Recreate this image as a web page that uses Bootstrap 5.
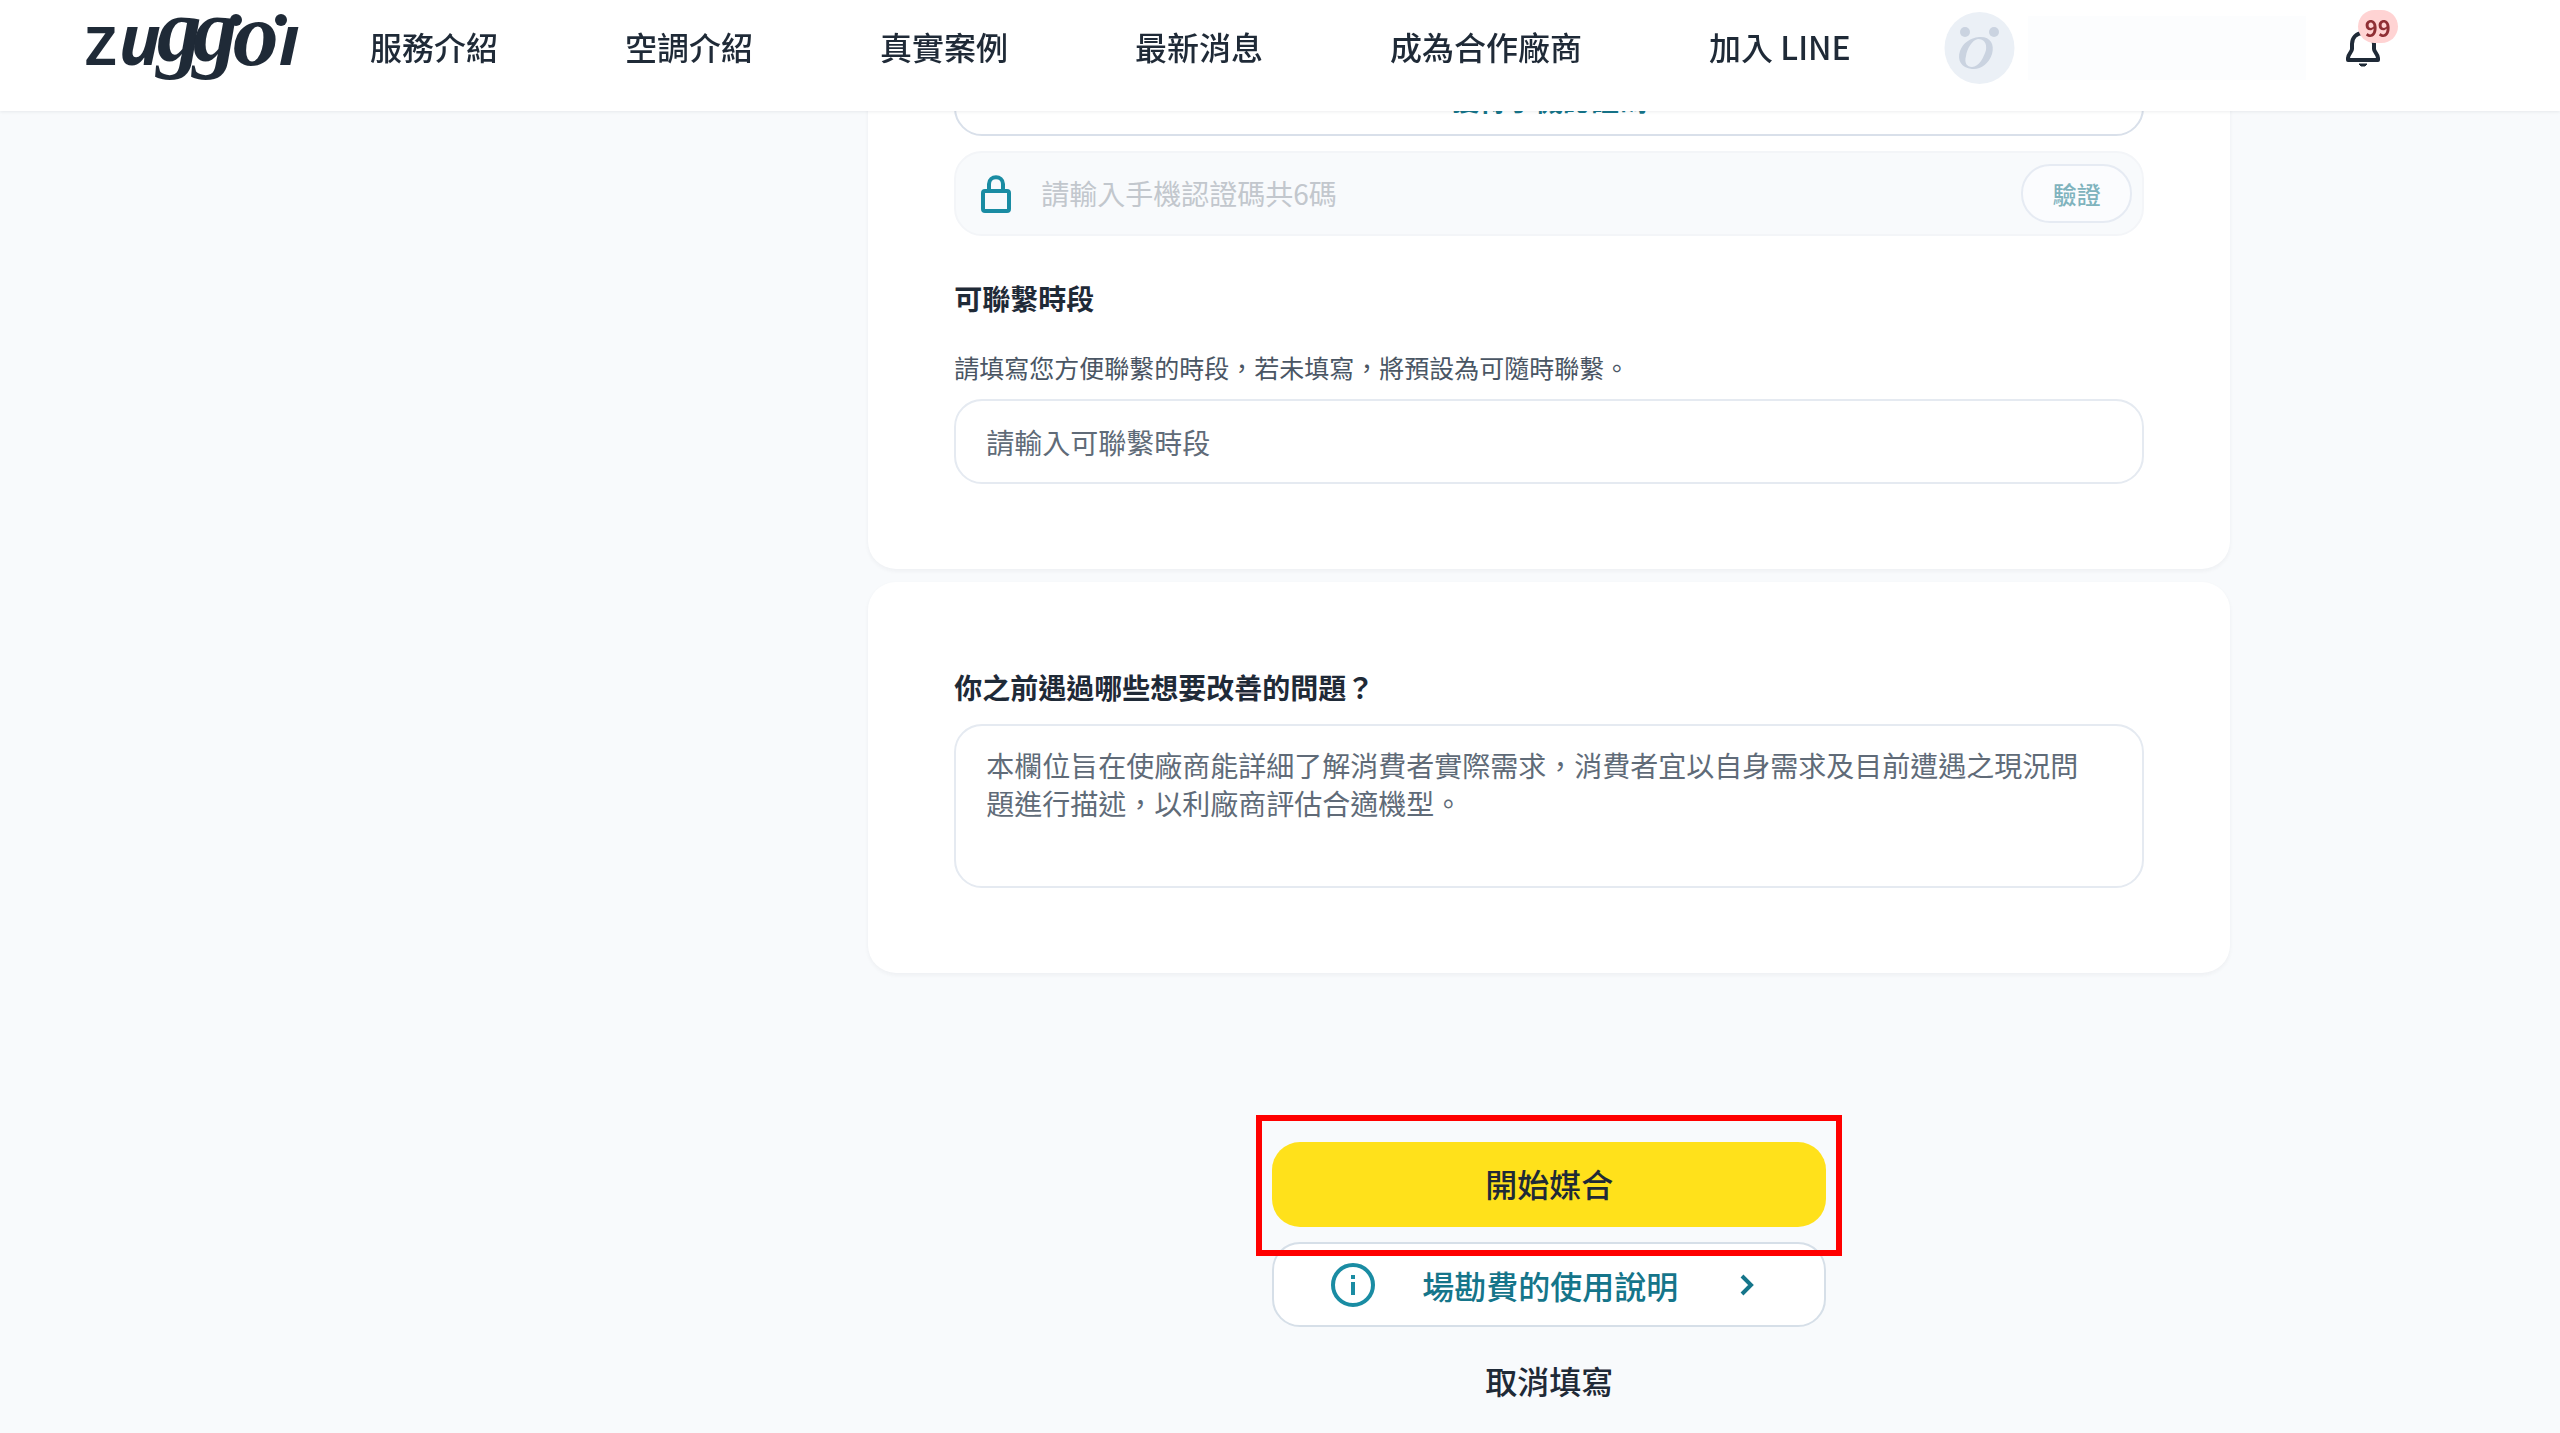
<!DOCTYPE html>
<html lang="zh-Hant">
<head>
<meta charset="utf-8">
<meta name="viewport" content="width=device-width, initial-scale=1">
<title>zuggoi</title>
<link rel="stylesheet" href="https://cdn.jsdelivr.net/npm/bootstrap@5.3.0/dist/css/bootstrap.min.css">
<style>
  :root { --ink: #1f2a37; --teal: #15758a; --teal-bright: #1a8ca3; --line: #e5eaf1; }
  body { background: #f8fafc; color: var(--ink); font-family: "Noto Sans CJK TC", sans-serif; font-size: 28px; line-height: 38px; overflow-x: hidden; }
  .site-header { height: 111px; padding: 0 160px 16px 84px; background: #fff; box-shadow: 0 1px 3px rgba(31, 42, 55, .08); }
  .site-logo { margin-right: 72px; line-height: 0; }
  .site-menu { gap: 127px; margin-right: 93px; padding-bottom: 4px; }
  .site-menu a, .action-btn { font-size: 32px; line-height: 44px; font-weight: 500; color: var(--ink); white-space: nowrap; text-decoration: none; }
  .user-name { width: 278px; height: 64px; margin-left: 13px; margin-right: 39px; background: #fcfdfe; }
  .bell-btn { position: relative; width: 36px; height: 40px; color: var(--ink); line-height: 0; }
  .bell-count { position: absolute; left: 13px; top: -18px; width: 40px; height: 33px; border-radius: 17px; background: #ffd3d3; color: #8f2f35; font-size: 22px; line-height: 34px; font-weight: 700; text-align: center; }
  .form-col { max-width: 1392px; padding: 0 15px; }
  .panel { background: #fff; border-radius: 28px; padding: 61px 86px 85px; box-shadow: 0 2px 4px rgba(31, 42, 55, .05); }
  .panel + .panel { margin-top: 13px; padding-top: 86px; }
  .field-box { border: 2px solid var(--line); border-radius: 28px; font-size: 28px; line-height: 38px; padding: 22px 30px; height: 85px; color: var(--ink); background: #fff; }
  .field-box::placeholder { color: #606b78; opacity: 1; }
  textarea.field-box { height: 164px; margin-top: 18px; padding: 20px 60px 20px 30px; resize: none; overflow: hidden; }
  .send-btn { height: 75px; border: 2px solid #d9e0ea; border-radius: 28px; color: var(--teal); font-size: 28px; font-weight: 700; line-height: 38px; padding: 0; background: #fff; }
  .code-row { height: 85px; margin-top: 15px; padding: 0 10px 0 24px; border: 2px solid #f3f5f8; border-radius: 28px; background: #f8fafc; }
  .code-row input, .code-row input:disabled { border: 0; background: transparent; padding: 0 29px 2px; font-size: 28px; line-height: 38px; }
  .code-row input::placeholder { color: #c2c7cd; opacity: 1; }
  .verify-btn, .verify-btn:disabled { width: 111px; height: 59px; border: 2px solid #e6ebf3; border-radius: 29px; background: #fbfcfe; color: #7fb3bd; opacity: 1; font-size: 24px; font-weight: 500; line-height: 32px; padding: 0; }
  .field-title { display: block; font-size: 28px; line-height: 38px; font-weight: 700; }
  .time-title { margin-top: 43px; }
  .field-note { margin: 33px 0 15px; font-size: 25px; line-height: 34px; color: #4a5664; }
  .actions { width: 554px; margin: 169px auto 0; }
  .action-btn { height: 85px; border-radius: 28px; padding: 0 0 4px; }
  .start-wrap { position: relative; }
  .start-wrap::after { content: ""; position: absolute; inset: -27px -16px -29px; border: 6px solid #f00; pointer-events: none; z-index: 1; }
  .btn-start, .btn-start:hover { background: #ffe11b; border: 0; }
  .btn-guide { margin-top: 15px; padding: 0 0 0 57px; border: 2px solid #d6dfe8; background: #fff; color: var(--teal); }
  .btn-guide span { margin: 0 61px 0 47px; }
  .btn-cancel { margin-top: 12px; }
</style>
</head>
<body>
<header class="site-header fixed-top d-flex align-items-center">
  <a class="site-logo" href="#" aria-label="zuggoi">
    <svg width="214" height="84" viewBox="84 6 214 84" fill="#1f2a37" overflow="visible">
      <text x="84" y="65" font-family="Open Sans" font-weight="600" font-size="70">z<tspan font-style="italic" font-weight="700" dx="1">u</tspan><tspan font-family="Liberation Serif" font-weight="700" font-style="italic" font-size="90" dx="-4" dy="-4">g</tspan><tspan font-family="Liberation Serif" font-weight="700" font-style="italic" font-size="90" dx="-9">g</tspan><tspan font-family="Liberation Serif" font-weight="700" font-style="italic" font-size="92" dx="-5" dy="4">o</tspan><tspan font-style="italic" font-weight="700">ı</tspan></text>
      <circle cx="236" cy="20" r="6"/><circle cx="281" cy="20" r="6"/>
    </svg>
  </a>
  <nav class="site-menu d-flex" aria-label="主選單">
    <a href="#">服務介紹</a><a href="#">空調介紹</a><a href="#">真實案例</a><a href="#">最新消息</a><a href="#">成為合作廠商</a><a href="#">加入 LINE</a>
  </nav>
  <svg class="flex-shrink-0" width="71" height="72" viewBox="0 0 71 72" aria-hidden="true">
    <ellipse cx="35.500" cy="36" rx="35" ry="36" fill="#ebf0f6"/>
    <g fill="#cad3e0"><circle cx="21" cy="20" r="5"/><circle cx="50" cy="20" r="5"/>
    <path fill-rule="evenodd" d="M35 25C46 24 51 32 48 42C45 52 36 58 28 57C17 56 13 48 16 39C19 31 26 26 35 25ZM34 27C28 28 23 37 22 44C20 51 23 55 28 55C35 55 40 45 42 38C43 31 40 27 34 27Z"/></g>
  </svg>
  <div class="user-name"></div>
  <button type="button" class="bell-btn btn p-0 border-0" aria-label="通知">
    <svg width="36" height="40" viewBox="0 0 36 40" fill="none" stroke="currentColor" stroke-width="4" stroke-linejoin="round"><path d="M18 5C11 5 7 10 7 16V21C7 24 3 26 3 30V32H33V30C33 26 29 24 29 21V16C29 10 25 5 18 5Z"/><path d="M14 36H22L20 38H16Z" fill="currentColor" stroke-width="1"/></svg>
    <span class="bell-count">99</span>
  </button>
</header>

<main class="container-fluid p-0">
  <div class="row g-0">
    <form class="form-col col offset-4">
      <section class="panel">
        <button type="button" class="send-btn btn w-100 d-block">獲得手機認證碼</button>
        <div class="code-row d-flex align-items-center">
          <svg class="flex-shrink-0" width="32" height="40" viewBox="0 0 32 40" fill="none" stroke="#1a8ca3" stroke-width="4"><rect x="3" y="17" width="26" height="20" rx="2"/><path d="M9 17V10C9 1 23 1 23 10V17"/></svg>
          <input class="form-control" type="text" aria-label="手機認證碼" placeholder="請輸入手機認證碼共6碼" disabled>
          <button type="button" class="verify-btn btn flex-shrink-0" disabled>驗證</button>
        </div>
        <label class="field-title time-title" for="contact-time">可聯繫時段</label>
        <p class="field-note" id="contact-note">請填寫您方便聯繫的時段，若未填寫，將預設為可隨時聯繫。</p>
        <input class="field-box form-control" id="contact-time" type="text" placeholder="請輸入可聯繫時段" aria-describedby="contact-note">
      </section>
      <section class="panel">
        <label class="field-title" for="problems">你之前遇過哪些想要改善的問題？</label>
        <textarea class="field-box form-control" id="problems" placeholder="本欄位旨在使廠商能詳細了解消費者實際需求，消費者宜以自身需求及目前遭遇之現況問題進行描述，以利廠商評估合適機型。"></textarea>
      </section>
      <div class="actions d-flex flex-column">
        <div class="start-wrap"><button type="submit" class="action-btn btn-start btn w-100 d-block">開始媒合</button></div>
        <button type="button" class="action-btn btn-guide btn d-flex align-items-center">
          <svg width="44" height="44" viewBox="0 0 44 44" fill="none" stroke="#1a8ca3" stroke-width="4"><circle cx="22" cy="22" r="20"/><path d="M22 19V32M22 12V16"/></svg>
          <span>場勘費的使用說明</span>
          <svg width="16" height="22" viewBox="0 0 16 22" fill="none" stroke="currentColor" stroke-width="4"><path d="M3 2L12 11L3 20"/></svg>
        </button>
        <button type="button" class="action-btn btn-cancel btn border-0">取消填寫</button>
      </div>
    </form>
  </div>
</main>
<script src="https://cdn.jsdelivr.net/npm/bootstrap@5.3.0/dist/js/bootstrap.bundle.min.js"></script>
</body>
</html>
